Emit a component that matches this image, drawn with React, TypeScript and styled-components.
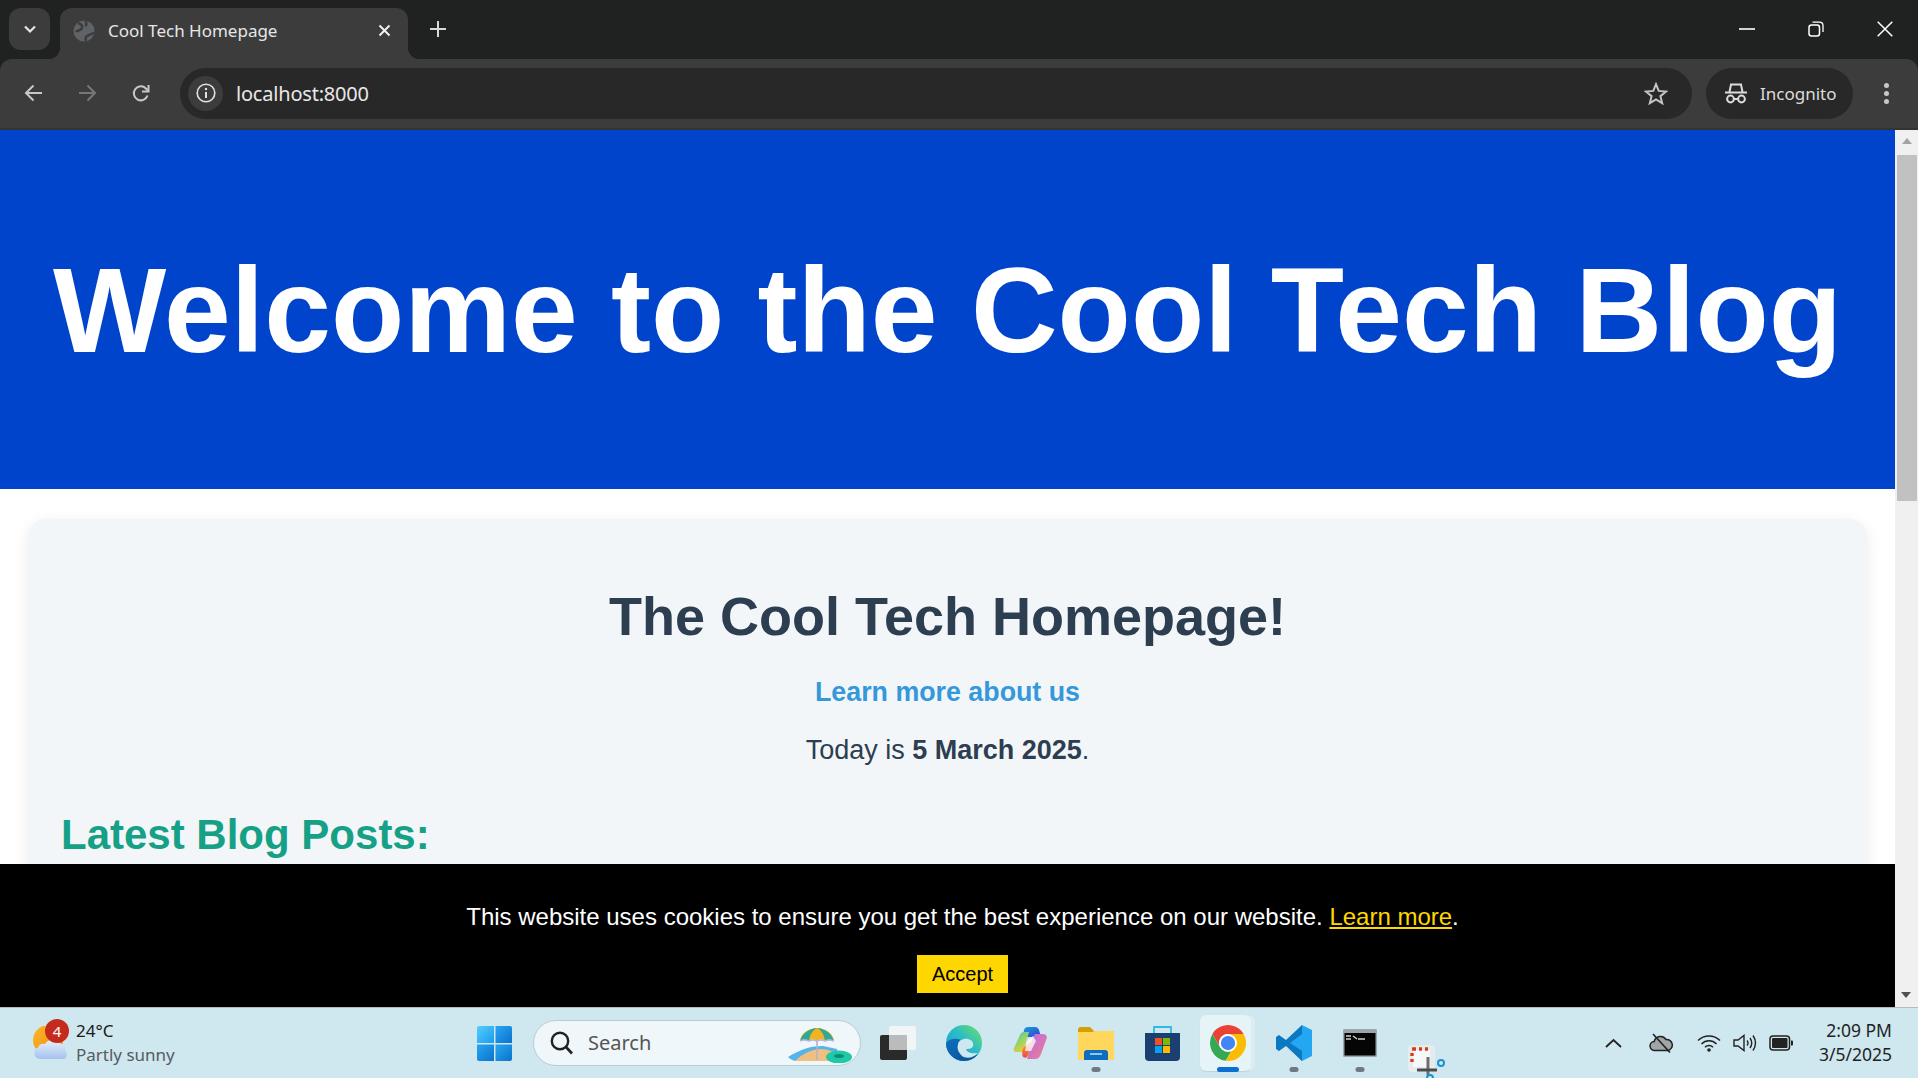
import React from "react";
import styled, { createGlobalStyle } from "styled-components";

const Global = createGlobalStyle`
  html, body { margin: 0; padding: 0; height: 100%; overflow: hidden; background: #202221; }
  #root { height: 100%; }
  * { box-sizing: border-box; }
`;

const Screen = styled.div`
  width: 1918px; height: 1078px; display: flex; flex-direction: column; overflow: hidden; background: #202221;
  font-family: "Noto Sans", "Open Sans", sans-serif;
`;

/* ---------- browser chrome ---------- */
const TabStrip = styled.div`
  height: 59px; flex: none; background: #202221; display: flex; align-items: flex-start; padding: 8px 0 0 9px; color: #e3e3e3;
`;
const TabSearch = styled.div`
  width: 41px; height: 42px; border-radius: 12px; background: #3c3c3c; display: flex; align-items: center; justify-content: center; flex: none;
`;
const Tab = styled.div`
  position: relative; width: 348px; height: 51px; margin-left: 10px; background: #3c3c3c; border-radius: 12px 12px 0 0;
  display: flex; align-items: center; padding: 0 17px 6px 13px; flex: none;
  &::before, &::after { content: ""; position: absolute; bottom: 0; width: 12px; height: 12px; }
  &::before { left: -12px; background: radial-gradient(circle at 0 0, transparent 12px, #3c3c3c 12.5px); }
  &::after { right: -12px; background: radial-gradient(circle at 100% 0, transparent 12px, #3c3c3c 12.5px); }
`;
const TabTitle = styled.span`
  margin-left: 13px; font-size: 17px; color: #e6e6e6; flex: 1; white-space: nowrap;
`;
const NewTab = styled.div`
  margin-left: 22px; height: 42px; display: flex; align-items: center; flex: none;
`;
const WindowControls = styled.div`
  margin-left: auto; display: flex; align-items: center; height: 42px; padding-right: 25px; gap: 53px;
`;
const Toolbar = styled.div`
  height: 71px; flex: none; background: #3c3c3c; border-radius: 12px 12px 0 0; border-bottom: 2px solid #333; position: relative;
  display: flex; align-items: center; padding: 0 0 1px 24px;
`;
const NavIcons = styled.div`
  display: flex; align-items: center; width: 156px; flex: none; gap: 35px;
`;
const Omnibox = styled.div`
  width: 1512px; height: 51px; flex: none; border-radius: 26px; background: #282828; display: flex; align-items: center; padding: 0 24px 0 8px;
`;
const InfoChip = styled.div`
  width: 35px; height: 35px; border-radius: 50%; background: #3c3c3c; display: flex; align-items: center; justify-content: center; flex: none;
`;
const Url = styled.span`
  margin-left: 13px; font-size: 20px; color: #e8e8e8; flex: 1; letter-spacing: -0.2px;
`;
const IncognitoPill = styled.div`
  margin-left: 14px; width: 147px; height: 51px; flex: none; border-radius: 26px; background: #282828; display: flex; align-items: center; padding-left: 19px; color: #dcdcdc; font-size: 17px;
  span { margin-left: 13px; }
`;
const MenuDots = styled.div`
  margin-left: 31px; display: flex; flex-direction: column; gap: 3px;
  i { display: block; width: 5px; height: 5px; border-radius: 50%; background: #c8c8c8; }
`;

/* ---------- page ---------- */
const Viewport = styled.div`
  position: relative; height: 877px; flex: none; display: flex; overflow: hidden; background: #fff;
`;
const Page = styled.div`
  width: 1895px; flex: none; overflow: hidden; font-family: "Liberation Sans", Arial, sans-serif; color: #2c3e50;
`;
const Hero = styled.header`
  height: 359px; background: #0044cc; display: flex; align-items: center; justify-content: center;
`;
const HeroTitle = styled.h1`
  margin: 0; color: #fff; font-size: 120px; font-weight: 700; white-space: nowrap;
`;
const Card = styled.main`
  margin: 30px 28px 0; height: 700px; background: #f3f6f9; border-radius: 18px; padding: 67px 33px 0;
  box-shadow: 0 4px 16px rgba(0, 0, 0, 0.08); text-align: center;
`;
const CardTitle = styled.h2`
  margin: 0; font-size: 54px; line-height: 60px; font-weight: 700;
`;
const AboutLink = styled.a`
  display: block; margin-top: 30px; font-size: 26.8px; line-height: 32px; font-weight: 700; color: #3498db; text-decoration: none;
`;
const Today = styled.p`
  margin: 26px 0 0; font-size: 27px; line-height: 32px;
`;
const Latest = styled.h3`
  margin: 45px 0 0; text-align: left; font-size: 42px; line-height: 48px; font-weight: 700; color: #16a085;
`;
const CookieBanner = styled.div`
  position: absolute; left: 0; top: 734px; width: 1895px; height: 143px; background: #000; color: #fff;
  font-family: "Liberation Sans", Arial, sans-serif; text-align: center; padding: 37px 0 0 30px;
`;
const CookieText = styled.p`
  margin: 0; font-size: 24px; line-height: 32px;
  a { color: #ffd700; text-decoration: underline; }
`;
const AcceptButton = styled.button`
  display: block; margin: 22px auto 0; width: 91px; height: 38px; border: 0; background: #ffd700; color: #000;
  font-family: "Liberation Sans", Arial, sans-serif; font-size: 20px; padding: 0;
`;
const Scrollbar = styled.div`
  width: 23px; flex: none; background: #f0f0f0; display: flex; flex-direction: column; align-items: center; position: relative; padding-top: 8px;
`;
const Thumb = styled.div`
  width: 20px; height: 346px; background: #c1c1c1; margin-top: 11px;
`;
const ArrowDown = styled.div`
  position: absolute; bottom: 9px; left: 6px;
  width: 0; height: 0; border-left: 5.5px solid transparent; border-right: 5.5px solid transparent; border-top: 6px solid #505050;
`;
const ArrowUp = styled.div`
  width: 0; height: 0; border-left: 5.5px solid transparent; border-right: 5.5px solid transparent; border-bottom: 6px solid #a3a3a3;
`;

/* ---------- taskbar ---------- */
const Taskbar = styled.div`
  height: 71px; flex: none; background: #cfe7ee; border-top: 1px solid #b1bdc1; display: flex; align-items: stretch; position: relative;
`;
const Weather = styled.div`
  width: 477px; flex: none; display: flex; align-items: center; padding-left: 32px;
`;
const WeatherIcon = styled.div`
  position: relative; width: 36px; height: 40px; margin-top: 6px; flex: none;
`;
const Badge = styled.div`
  position: absolute; left: 13px; top: -7px; width: 24px; height: 24px; border-radius: 50%; background: #c42b1c; color: #fff;
  font-size: 15px; display: flex; align-items: center; justify-content: center;
`;
const WeatherText = styled.div`
  margin-left: 8px; display: flex; flex-direction: column; font-size: 17px; line-height: 24px; color: #1a1a1a; margin-top: -1px;
  small { font-size: 17px; color: #555c60; }
`;
const StartIcon = styled.div`
  width: 35px; flex: none; display: flex; align-items: center;
`;
const SearchBox = styled.div`
  position: relative; margin-left: 21px; width: 328px; height: 46px; align-self: center; border-radius: 23px; background: #eff7fa; border: 1px solid #b7cdd5;
  display: flex; align-items: center; padding-left: 16px; color: #555;
  font-size: 20px; flex: none;
  span { margin-left: 15px; margin-top: -1px; }
`;
const BeachArt = styled.div`
  position: absolute; right: 7px; top: 4px;
`;
const Slot = styled.div<{ $first?: boolean }>`
  position: relative; width: 66px; flex: none; display: flex; align-items: center; justify-content: center;
  margin-left: ${(p) => (p.$first ? "4px" : "0")};
`;
const ActiveTile = styled.div`
  position: absolute; left: 5px; top: 7px; width: 51px; height: 56px; border-radius: 6px; background: #e6f3f7; box-shadow: 5px 0 0 -1px #dcedf2, 0 1px 1px #bdd2d9;
`;
const RunningDot = styled.i<{ $active?: boolean }>`
  position: absolute; bottom: 6px; left: 50%; transform: translateX(-50%); height: 5px; border-radius: 3px;
  width: ${(p) => (p.$active ? "22px" : "9px")};
  background: ${(p) => (p.$active ? "#0a6fd1" : "#6e7a80")};
`;
const IconLayer = styled.div`
  position: relative; display: flex;
`;
const SnipIcon = styled.div`
  position: absolute; left: 15px; bottom: -1px; display: flex;
`;
const Tray = styled.div`
  margin-left: auto; display: flex; align-items: center; padding-right: 26px;
`;
const TrayIcons = styled.div`
  display: flex; align-items: center; gap: 12px; margin-right: 19px;
`;
const CloudIcon = styled.div`
  display: flex; margin-right: 24px;
`;
const Chevron = styled.div`
  margin-right: 27px; display: flex;
`;
const Clock = styled.div`
  text-align: right; font-size: 17.5px; line-height: 24px; color: #1f1f1f; width: 80px; margin-top: -2px;
`;

const Sv = ({ w, h, vb, children }: { w: number; h: number; vb?: string; children: React.ReactNode }) => (
  <svg width={w} height={h} viewBox={vb ?? `0 0 ${w} ${h}`} fill="none" style={{ display: "block", flex: "none" }}>
    {children}
  </svg>
);

const ChromeLogo = () => (
  <Sv w={36} h={36} vb="0 0 48 48">
    <circle cx="24" cy="24" r="24" fill="#fff" />
    <path d="M24 0C15.1 0 7.3 4.8 3.2 12l10.4 18A12 12 0 0 1 24 12h20.8C40.7 4.8 32.9 0 24 0z" fill="#ea4335" />
    <path d="M3.2 12A24 24 0 0 0 21 47.8L31 30a12 12 0 0 1-17.4 0z" fill="#34a853" />
    <path d="M44.8 12H24a12 12 0 0 1 7 18L21 47.8c1 .1 2 .2 3 .2a24 24 0 0 0 20.8-36z" fill="#fbbc04" />
    <circle cx="24" cy="24" r="12" fill="#fff" />
    <circle cx="24" cy="24" r="9.5" fill="#4285f4" />
  </Sv>
);

export default function App() {
  return (
    <Screen>
      <Global />
      <TabStrip>
        <TabSearch>
          <Sv w={14} h={9}><path d="M2 1.5 7 6.5 12 1.5" stroke="#e6e6e6" strokeWidth="2.2" /></Sv>
        </TabSearch>
        <Tab>
          <Sv w={22} h={22}>
            <circle cx="11" cy="11" r="10.5" fill="#5f6368" />
            <path d="M5 3c3 1 5 2 4 5s-5 2-6 4M13 21c-1-3 0-5 3-6s4-2 5-2M12 1c2 2 2 4 0 5" stroke="#3c3c3c" strokeWidth="2.4" />
          </Sv>
          <TabTitle>Cool Tech Homepage</TabTitle>
          <Sv w={13} h={13}><path d="M1.5 1.5 11.5 11.5M11.5 1.5 1.5 11.5" stroke="#f0f0f0" strokeWidth="2" /></Sv>
        </Tab>
        <NewTab>
          <Sv w={16} h={16}><path d="M8 0V16M0 8H16" stroke="#d8d8d8" strokeWidth="2" /></Sv>
        </NewTab>
        <WindowControls>
          <Sv w={16} h={2}><path d="M0 1H16" stroke="#fff" strokeWidth="1.6" /></Sv>
          <Sv w={16} h={16}>
            <rect x="1" y="4" width="10.5" height="11" rx="2.5" stroke="#fff" strokeWidth="1.5" />
            <path d="M4.5 1.2H11.5Q15 1.2 15 4.7V11" stroke="#fff" strokeWidth="1.3" />
          </Sv>
          <Sv w={16} h={16}><path d="M.7.7 15.3 15.3M15.3.7.7 15.3" stroke="#fff" strokeWidth="1.5" /></Sv>
        </WindowControls>
      </TabStrip>
      <Toolbar>
        <NavIcons>
          <Sv w={19} h={18}><path d="M18 9H2M9.5 1.5 2 9l7.5 7.5" stroke="#c8c8c8" strokeWidth="2" /></Sv>
          <Sv w={19} h={18}><path d="M1 9H17M9.5 1.5 17 9l-7.5 7.5" stroke="#777" strokeWidth="2" /></Sv>
          <Sv w={18} h={19}>
            <path d="M15.5 11.5a7 7 0 1 1-1.6-7L16 6.5" stroke="#c8c8c8" strokeWidth="2" />
            <path d="M16.5 1V7.5H10" stroke="#c8c8c8" strokeWidth="2" />
          </Sv>
        </NavIcons>
        <Omnibox>
          <InfoChip>
            <Sv w={20} h={20}>
              <circle cx="10" cy="10" r="8.8" stroke="#e2e2e2" strokeWidth="1.6" />
              <path d="M10 9V15" stroke="#e2e2e2" strokeWidth="2" />
              <circle cx="10" cy="6" r="1.2" fill="#e2e2e2" />
            </Sv>
          </InfoChip>
          <Url>localhost:8000</Url>
          <Sv w={24} h={23} vb="0 0 24 23">
            <path d="M12 2.2 14.7 8.9 22 9.5 16.4 14.2 18.2 21.2 12 17.4 5.8 21.2 7.6 14.2 2 9.5 9.3 8.9Z" stroke="#c4c4c4" strokeWidth="2" strokeLinejoin="miter" />
          </Sv>
        </Omnibox>
        <IncognitoPill>
          <Sv w={22} h={21}>
            <path d="M4.5 9 6 1.5H16L17.5 9" stroke="#dcdcdc" strokeWidth="2" fill="none" />
            <path d="M0 9.5H22" stroke="#dcdcdc" strokeWidth="2" />
            <circle cx="5.5" cy="16" r="3.4" stroke="#dcdcdc" strokeWidth="2" />
            <circle cx="16.5" cy="16" r="3.4" stroke="#dcdcdc" strokeWidth="2" />
            <path d="M9 16H13" stroke="#dcdcdc" strokeWidth="2" />
          </Sv>
          <span>Incognito</span>
        </IncognitoPill>
        <MenuDots><i /><i /><i /></MenuDots>
      </Toolbar>

      <Viewport>
        <Page>
          <Hero><HeroTitle>Welcome to the Cool Tech Blog</HeroTitle></Hero>
          <Card>
            <CardTitle>The Cool Tech Homepage!</CardTitle>
            <AboutLink href="#">Learn more about us</AboutLink>
            <Today>Today is <b>5 March 2025</b>.</Today>
            <Latest>Latest Blog Posts:</Latest>
          </Card>
        </Page>
        <Scrollbar>
          <ArrowUp />
          <Thumb />
          <ArrowDown />
        </Scrollbar>
        <CookieBanner>
          <CookieText>This website uses cookies to ensure you get the best experience on our website. <a href="#">Learn more</a>.</CookieText>
          <AcceptButton>Accept</AcceptButton>
        </CookieBanner>
      </Viewport>

      <Taskbar>
        <Weather>
          <WeatherIcon>
            <Sv w={36} h={36}>
              <defs>
                <linearGradient id="sun" x1="0" y1="0" x2="1" y2="1"><stop offset="0" stopColor="#fbb828" /><stop offset="1" stopColor="#ef8a12" /></linearGradient>
                <linearGradient id="cl" x1="0" y1="0" x2="0" y2="1"><stop offset="0" stopColor="#e6f1fb" /><stop offset="1" stopColor="#a5c1ee" /></linearGradient>
              </defs>
              <circle cx="16" cy="14" r="15" fill="url(#sun)" />
              <path d="M8 33a6 6 0 0 1-2-11.5A6 6 0 0 1 13 18a8 8 0 0 1 13-1 6.5 6.5 0 0 1 7 8 4.5 4.5 0 0 1-1 8z" fill="url(#cl)" />
            </Sv>
            <Badge>4</Badge>
          </WeatherIcon>
          <WeatherText>
            <span>24°C</span>
            <small>Partly sunny</small>
          </WeatherText>
        </Weather>

        <StartIcon>
          <Sv w={35} h={35}>
            <defs>
              <linearGradient id="w1" x1="0" y1="0" x2="1" y2="1"><stop offset="0" stopColor="#52cffe" /><stop offset="1" stopColor="#1c9bea" /></linearGradient>
              <linearGradient id="w2" x1="0" y1="0" x2="1" y2="1"><stop offset="0" stopColor="#2aa6ef" /><stop offset="1" stopColor="#0a73cf" /></linearGradient>
            </defs>
            <path d="M2 0H17V17H0V2A2 2 0 0 1 2 0Z" fill="url(#w1)" />
            <path d="M18.5 0H33A2 2 0 0 1 35 2V17H18.5Z" fill="url(#w2)" />
            <path d="M0 18.5H17V35H2A2 2 0 0 1 0 33Z" fill="url(#w2)" />
            <path d="M18.5 18.5H35V33A2 2 0 0 1 33 35H18.5Z" fill="url(#w2)" />
          </Sv>
        </StartIcon>
        <SearchBox>
          <Sv w={23} h={24}>
            <circle cx="10" cy="10" r="8.2" stroke="#222" strokeWidth="2.4" />
            <path d="M16 16 22 22.5" stroke="#222" strokeWidth="2.6" />
          </Sv>
          <span>Search</span>
          <BeachArt>
            <Sv w={66} h={38}>
              <path d="M1 32C14 24 24 21 36 21L50 24 52 36H10Q5 36 1 32Z" fill="#58b3e8" />
              <path d="M8 36C16 28 26 24 34 24 42 24 50 28 56 36Z" fill="#f0c080" />
              <path d="M30 3V35" stroke="#b4b4c4" strokeWidth="1.6" />
              <path d="M13 16C14 8 22 3 30 3 38 3 46 8 47 16 44 14 41 14 38 16 35 14 33 14 30 16 27 14 24 14 22 16 19 14 16 14 13 16Z" fill="#f4b21e" />
              <path d="M22 16C23 9 26 5 30 3 24 3 15 8 13 16 16 14 19 14 22 16ZM38 16C37 9 34 5 30 3 36 3 45 8 47 16 44 14 41 14 38 16Z" fill="#2fa897" />
              <path d="M13 16Q17 14 22 16 26 14 30 16 34 14 38 16 42 14 47 16" stroke="#bdb0e0" strokeWidth="1.5" />
              <ellipse cx="52" cy="32" rx="13" ry="6.5" fill="#1fc9a4" />
              <ellipse cx="52" cy="31" rx="5" ry="2" fill="#0e8f7c" />
            </Sv>
          </BeachArt>
        </SearchBox>

        <Slot $first>
          <Sv w={36} h={34}>
            <rect x="0" y="9" width="27" height="25" rx="2" fill="#2a2a2a" />
            <rect x="9" y="0" width="27" height="24" rx="2" fill="#f2f5f6" />
            <rect x="9" y="9" width="18" height="15" fill="#b9bcbd" />
          </Sv>
        </Slot>
        <Slot>
          <Sv w={36} h={36}>
            <defs>
              <linearGradient id="e1" x1="0" y1="1" x2="1" y2="0"><stop offset="0" stopColor="#0e9fd0" /><stop offset="0.55" stopColor="#2dbcc8" /><stop offset="1" stopColor="#6de35f" /></linearGradient>
              <linearGradient id="e2" x1="0" y1="0" x2="1" y2="1"><stop offset="0" stopColor="#0e70bd" /><stop offset="1" stopColor="#0b4e94" /></linearGradient>
            </defs>
            <circle cx="18" cy="18" r="18" fill="url(#e1)" />
            <path d="M0 18A18 18 0 0 0 18 36C24 36 29 33 32 29 26 32 18 32 14 28 10 24 11 18 15 15 10 13 4 13 0 18Z" fill="url(#e2)" />
            <path d="M12 20C12 15 18 13 22 14 26 15 28 18 27 21 26 24 22 24 20 24 21 28 27 29 32 28 28 33 20 34 16 31 13 28 11 24 12 20Z" fill="#cfe7ee" />
          </Sv>
        </Slot>
        <Slot>
          <Sv w={34} h={32}>
            <defs>
              <linearGradient id="c1" x1="0" y1="0" x2="1" y2="1"><stop offset="0" stopColor="#1e9be6" /><stop offset="1" stopColor="#2c45c8" /></linearGradient>
              <linearGradient id="c2" x1="0" y1="0" x2="0.6" y2="1"><stop offset="0" stopColor="#3dc4c8" /><stop offset="0.5" stopColor="#8ed66a" /><stop offset="1" stopColor="#f7c832" /></linearGradient>
              <linearGradient id="c3" x1="0" y1="0" x2="1" y2="1"><stop offset="0" stopColor="#b86be8" /><stop offset="1" stopColor="#f07f8d" /></linearGradient>
              <linearGradient id="c4" x1="0" y1="0" x2="0" y2="1"><stop offset="0" stopColor="#f7a83c" /><stop offset="1" stopColor="#f0483c" /></linearGradient>
            </defs>
            <path d="M11 3Q12 0 15 0H22Q25 0 26 3L28 10H10Z" fill="url(#c1)" />
            <path d="M7 8Q8 5 11 5H16L10 25H4Q0 25 1 21Z" fill="url(#c2)" />
            <path d="M22 7H29Q35 7 33.5 12L28 27Q26.5 32 22 32H14L20 10Z" fill="url(#c3)" />
            <path d="M11 20 19 14 15 28Q14 32 10 30 8 25 11 20Z" fill="url(#c4)" />
            <path d="M14 14 20 9 23 14 18 24 12 24Z" fill="#fff" opacity="0.75" />
          </Sv>
        </Slot>
        <Slot>
          <IconLayer>
            <Sv w={36} h={33}>
              <path d="M0 3Q0 0 3 0H12L16 4H36V10H0Z" fill="#d49f05" />
              <path d="M0 5H14L17 4H36V33H0Z" fill="#ffd75c" />
              <path d="M6 33V26Q6 23 9 23H27Q30 23 30 26V33Z" fill="#0f6dc0" />
              <path d="M12 27H24" stroke="#8cc8f0" strokeWidth="2" />
            </Sv>
          </IconLayer>
          <RunningDot />
        </Slot>
        <Slot>
          <Sv w={35} h={35}>
            <path d="M9 7V1H26V7" stroke="#2dbbe6" strokeWidth="1.8" />
            <path d="M0 7H35V31Q35 35 31 35H4Q0 35 0 31Z" fill="#1b3f70" />
            <rect x="10" y="12" width="7" height="7" fill="#f25022" />
            <rect x="18" y="12" width="7" height="7" fill="#7fba00" />
            <rect x="10" y="20" width="7" height="7" fill="#00a4ef" />
            <rect x="18" y="20" width="7" height="7" fill="#ffb900" />
          </Sv>
        </Slot>
        <Slot>
          <ActiveTile />
          <IconLayer><ChromeLogo /></IconLayer>
          <RunningDot $active />
        </Slot>
        <Slot>
          <Sv w={36} h={36}>
            <path d="M26 0 36 5V31L26 36 10 20 26 8Z" fill="#22a7f0" />
            <path d="M26 0 10 15 3 10 0 12V24L3 26 10 21 26 36V26L14 18 26 9Z" fill="#0b78c2" />
          </Sv>
          <RunningDot />
        </Slot>
        <Slot>
          <Sv w={34} h={28}>
            <rect x="0" y="0" width="34" height="28" rx="1.5" fill="#9aa6aa" />
            <rect x="1.5" y="4" width="31" height="22.5" fill="#050505" />
            <path d="M3 7H8M3 10H8M10 7 14 10M15 10H22" stroke="#cfcfcf" strokeWidth="1.4" />
          </Sv>
          <RunningDot />
        </Slot>
        <Slot>
          <SnipIcon>
            <Sv w={37} h={34}>
              <rect x="0" y="0" width="27" height="27" rx="4" fill="#e4ecef" />
              <rect x="5" y="5" width="17" height="17" fill="#f6f8f9" />
              <path d="M4 4H8M11 4H14M17 4H20M4 8V11M4 14V17" stroke="#d63c1c" strokeWidth="3.4" />
              <path d="M20 12V30" stroke="#6e6e6e" strokeWidth="3" />
              <path d="M9 25H29" stroke="#4c4c4c" strokeWidth="3" />
              <circle cx="33" cy="18" r="3" stroke="#1793d1" strokeWidth="2" />
              <circle cx="22" cy="33" r="3" stroke="#1793d1" strokeWidth="2" />
            </Sv>
          </SnipIcon>
        </Slot>

        <Tray>
          <Chevron>
            <Sv w={17} h={10}><path d="M1 9 8.5 2 16 9" stroke="#222" strokeWidth="1.8" /></Sv>
          </Chevron>
          <CloudIcon>
            <Sv w={24} h={20}>
              <path d="M6 17.5a4.5 4.5 0 0 1-.8-9A6.5 6.5 0 0 1 17 6.5a5 5 0 0 1 1.5 11Z" fill="#9ea6a8" stroke="#222" strokeWidth="1.5" />
              <path d="M4 1 21 19.5" stroke="#222" strokeWidth="1.6" />
            </Sv>
          </CloudIcon>
          <TrayIcons>
            <Sv w={24} h={18}>
              <path d="M1 6.5a15.5 15.5 0 0 1 22 0M4.5 10a10.5 10.5 0 0 1 15 0M8 13.3a5.5 5.5 0 0 1 8 0" stroke="#222" strokeWidth="1.5" />
              <circle cx="12" cy="16" r="1.8" fill="#222" />
            </Sv>
            <Sv w={24} h={18}>
              <path d="M1 6H5L11 1.5V16.5L5 12H1Z" stroke="#222" strokeWidth="1.4" />
              <path d="M14 6.5Q16 9 14 11.5M17 4Q20.5 9 17 14M20 1.5Q25 9 20 16.5" stroke="#222" strokeWidth="1.4" />
            </Sv>
            <Sv w={24} h={16}>
              <rect x="1" y="1" width="19.5" height="14" rx="3" stroke="#222" strokeWidth="1.5" />
              <rect x="3" y="3" width="15.5" height="10" rx="1" fill="#222" />
              <path d="M22 5.5H23A1 1 0 0 1 24 6.5V9.5A1 1 0 0 1 23 10.5H22Z" fill="#222" />
            </Sv>
          </TrayIcons>
          <Clock>2:09 PM<br />3/5/2025</Clock>
        </Tray>
      </Taskbar>
    </Screen>
  );
}
